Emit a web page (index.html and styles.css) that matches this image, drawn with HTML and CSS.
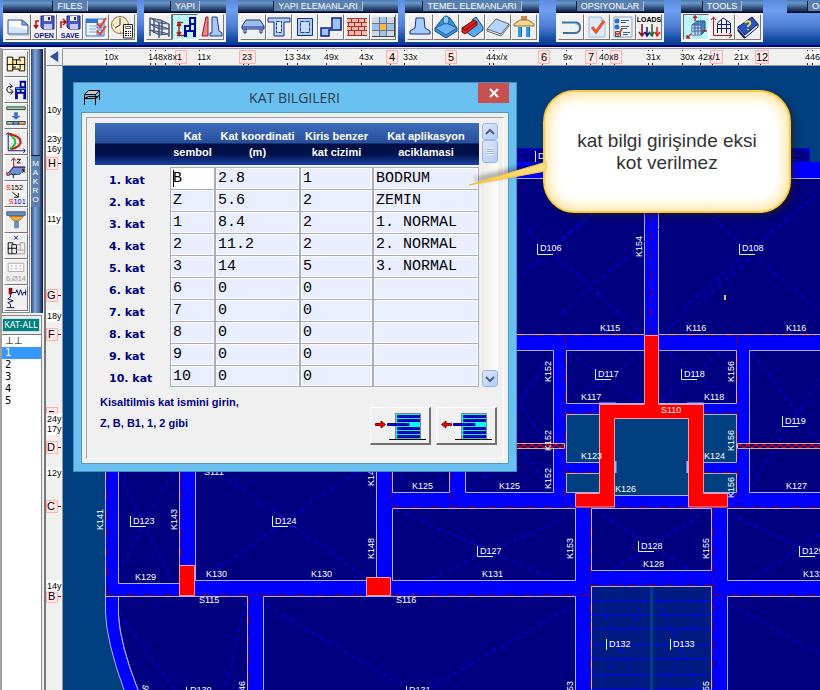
FILE: index.html
```html
<!DOCTYPE html>
<html lang="tr">
<head>
<meta charset="utf-8">
<title>KAT BILGILERI</title>
<link rel="stylesheet" href="styles.css">
</head>
<body>
<header class="ribbon">
  <section class="group">
    <h2><span>FILES</span></h2>
    <div class="tools">
      <button aria-label="Yeni"><svg viewBox="0 0 24 24"><path d="M2 5H16L22 10V19H2Z" fill="#d4e6fb" stroke="#3c5b9a"/><path d="M3 6H15V9L21 12V14L3 11Z" fill="#fff"/><path d="M16 5V10H22Z" fill="#86b1e8" stroke="#3c5b9a"/><path d="M3 20H23V11" fill="none" stroke="#9aa5bb"/></svg></button>
      <button aria-label="Open"><svg viewBox="0 0 24 24"><path d="M9 1H22V14H11L9 12Z" fill="#4c55c4" stroke="#23287e"/><path d="M12 1H19V6H12Z" fill="#e8edff"/><path d="M16 2H18V5H16Z" fill="#23287e"/><path d="M12 9H20V14H12Z" fill="#c0caf5"/><path d="M7 6H4V12M2 10L4 13L6 10" fill="none" stroke="#b01010" stroke-width="1.5"/><text x="12" y="23" class="cap">OPEN</text></svg></button>
      <button aria-label="Save"><svg viewBox="0 0 24 24"><path d="M9 1H22V14H11L9 12Z" fill="#4c55c4" stroke="#23287e"/><path d="M12 1H19V6H12Z" fill="#e8edff"/><path d="M16 2H18V5H16Z" fill="#23287e"/><path d="M12 9H20V14H12Z" fill="#c0caf5"/><path d="M3 13V7H7M5 4L8 7L5 10" fill="none" stroke="#b01010" stroke-width="1.5"/><text x="12" y="23" class="cap">SAVE</text></svg></button>
      <button aria-label="Liste"><svg viewBox="0 0 24 24"><path d="M2 4H20V21H2Z" fill="#eef5ff" stroke="#3579c8"/><path d="M2 4H14V8H2Z" fill="#2d78cc"/><path d="M5 11H12M5 14H12M5 17H12" stroke="#80a0cc"/><path d="M13 9H18V13H13ZM13 15H18V20H13Z" fill="#fff" stroke="#3579c8"/><path d="M13 8L16 12L22 3M13 16L16 19L22 11" fill="none" stroke="#e8402c" stroke-width="2"/></svg></button>
      <button aria-label="Saat"><svg viewBox="0 0 24 24"><circle cx="10" cy="10" r="8.500" fill="#f8edcc" stroke="#8b7442"/><path d="M10 3V10L5 13" fill="none" stroke="#4a3b21"/><path d="M3 10H4M16 10H17M10 17H11" stroke="#8b7442"/><path d="M13.500 9.500H22.500V23H13.500Z" fill="#fff" stroke="#222"/><path d="M15.500 11.500H20.500V13.500H15.500Z" fill="#fff" stroke="#666"/><path d="M15 16.500H17M18 16.500H19M20 16.500H21M15 18.500H17M18 18.500H19M20 18.500H21M15 20.500H17M18 20.500H19M20 20.500H21" stroke="#000"/></svg></button>
    </div>
  </section>
  <section class="group gap-s">
    <h2><span>YAPI</span></h2>
    <div class="tools">
      <button aria-label="Yapi"><svg viewBox="0 0 24 24"><path d="M3 3L14 5L22 9L12 8ZM3 9L14 11L22 14L12 14ZM3 15L14 17L22 19L12 20Z" fill="#95aac8" stroke="#465872"/><path d="M3 3V21M7 4V18M12 8V23M22 9V22M15 6V20" stroke="#465872" stroke-width="1.500"/></svg></button>
      <button class="on" aria-label="Katlar"><svg viewBox="0 0 24 24"><path d="M11 10H16V2H23V22H20V17H14V22H11ZM13 12V15H16V12ZM18 4V8H21V4ZM18 10V15H21V10Z" fill="#0000a0" fill-rule="evenodd"/><path d="M6 9V19M4 11L6 8L8 11M4 17L6 20L8 17M4 7.500H10M4 20.500H11" fill="none" stroke="#b01818" stroke-width="1.500"/></svg></button>
      <button aria-label="Perde"><svg viewBox="0 0 24 24"><path d="M7 2H9V21H3Z" fill="#e08a90" stroke="#a41822"/><path d="M13 2H18L20 16L23 18V21H11V18H13Z" fill="#abc7ef" stroke="#1c3f9b"/></svg></button>
    </div>
  </section>
  <section class="group gap-m">
    <h2><span>YAPI ELEMANLARI</span></h2>
    <div class="tools">
      <button aria-label="Doseme"><svg viewBox="0 0 24 24"><path d="M5 5H19L23 11V14H1V11Z" fill="#9cbcec" stroke="#1b2f80"/><path d="M1 12H23M3 14V18H5V14M19 14V18H21V14" fill="none" stroke="#1b2f80"/></svg></button>
      <button aria-label="Kiris"><svg viewBox="0 0 24 24"><path d="M1 3H23V7H17V21H7V7H1Z" fill="#b3d4fb" stroke="#1b2f80"/><path d="M9.500 6.500H14.500V17.500H9.500Z" fill="#dbeaff" stroke="#334" stroke-dasharray="3 1"/></svg></button>
      <button aria-label="Kolon"><svg viewBox="0 0 24 24"><path d="M4.500 3.500H19.500V20.500H4.500Z" fill="#a5cdfb" stroke="#1b2f80"/><path d="M7.500 6.500H16.500V17.500H7.500Z" fill="#c0ddff" stroke="#444" stroke-dasharray="4 1"/></svg></button>
      <button aria-label="Perde plan"><svg viewBox="0 0 24 24"><path d="M14 3H22V15H10V21H2V13H13V3Z" fill="#9cc4f8" stroke="#101c8a" stroke-width="1.500"/></svg></button>
      <button aria-label="Duvar"><svg viewBox="0 0 24 24"><path d="M2 3H22V21H2Z" fill="#f0b8a8"/><path d="M2 3.500H22M2 7.500H22M2 11.500H22M2 15.500H22M2 20.500H22M6.500 3V7M13.500 3V7M19.500 3V7M3.500 7V11M9.500 7V11M16.500 7V11M6.500 11V15M13.500 11V15M19.500 11V15M3.500 15V20M9.500 15V20M16.500 15V20" stroke="#a03426"/></svg></button>
      <button aria-label="Izgara"><svg viewBox="0 0 24 24"><path d="M1 2H23V21H1Z" fill="#a0c0ea"/><path d="M1 2H8V8H1ZM16 2H23V8H16ZM1 15H8V21H1ZM16 15H23V21H16Z" fill="#d0d8e4"/><path d="M8 8H16V15H8Z" fill="#f6bd3c"/><path d="M1 8.500H23M1 15.500H23M8.500 2V21M15.500 2V21" stroke="#69748c"/><path d="M1 21.500H23.500V2" fill="none" stroke="#404858"/></svg></button>
    </div>
  </section>
  <section class="group gap-s">
    <h2><span>TEMEL ELEMANLARI</span></h2>
    <div class="tools">
      <button aria-label="Tekil temel"><svg viewBox="0 0 24 24"><path d="M8 3H16L17 13L22 16V19H2V16L7 13Z" fill="#a5cdfb" stroke="#1b2f80"/></svg></button>
      <button aria-label="Temel"><svg viewBox="0 0 24 24"><path d="M9 3L12 1L16 3L23 13V16L12 23L1 16V13Z" fill="#3b8edb" stroke="#174a8d"/><path d="M12 8L23 13L12 20L1 13Z" fill="#6bb3f4" stroke="#205ba0"/><ellipse cx="12" cy="5" rx="3" ry="4" fill="#8ac8fa" stroke="#205ba0"/></svg></button>
      <button aria-label="Surekli temel"><svg viewBox="0 0 24 24"><path d="M13 4L16 2L23 12V15L14 22L6 17Z" fill="#5aa8ee" stroke="#174a8d"/><path d="M2 13L14 5L17 7V10L5 19L2 17Z" fill="#d82121" stroke="#700b0b"/><path d="M2 13L5 15L17 7" fill="none" stroke="#700b0b"/></svg></button>
      <button aria-label="Radye"><svg viewBox="0 0 24 24"><path d="M1 14L10 4L23 9L15 19Z" fill="#b7d5fa" stroke="#5d6570"/><path d="M1 14V16L15 21L23 11V9" fill="none" stroke="#5d6570"/></svg></button>
      <button aria-label="Kazik"><svg viewBox="0 0 24 24"><path d="M9 1H15V5H9Z" fill="#c88757"/><path d="M8 5H16L22 9V11H2V9Z" fill="#f4d48e" stroke="#967029"/><path d="M6 12H10V22H6ZM14 12H18V22H14Z" fill="#2f9be4"/><path d="M9.500 12V22M17.500 12V22" stroke="#126bad"/></svg></button>
    </div>
  </section>
  <section class="group gap-l">
    <h2><span>OPSIYONLAR</span></h2>
    <div class="tools">
      <button aria-label="Geri"><svg viewBox="0 0 24 24"><path d="M3 7.500H17Q21 8 21 12.500Q21 18 16 18H4" fill="none" stroke="#41709b" stroke-width="2"/><path d="M3 8.500H16Q19 9 20 12" fill="none" stroke="#8db7da"/></svg></button>
      <button aria-label="Kontrol"><svg viewBox="0 0 24 24"><path d="M4 2H16L20 6V22H4Z" fill="#dcebfc" stroke="#a9bad2"/><path d="M16 2V6H20" fill="#b8cfeb" stroke="#a9bad2"/><path d="M7 12L11 17L19 6" fill="none" stroke="#e9572c" stroke-width="3"/></svg></button>
      <button aria-label="Ayarlar"><svg viewBox="0 0 24 24"><path d="M3 2H21V22H3Z" fill="#eaf2fd" stroke="#8fa2c0"/><circle cx="6" cy="6" r="2.500" fill="#2770c5"/><circle cx="6" cy="12" r="2.500" fill="#2770c5"/><path d="M10 5.500H18M10 7.500H15M10 11.500H18M10 13.500H16M12 17.500H19M12 19.500H17" stroke="#50617c"/><path d="M4.500 16.500H9.500V21.500H4.500Z" fill="#fff" stroke="#334f7c"/><path d="M5 18L7 20L11 14" fill="none" stroke="#d84b29" stroke-width="2"/></svg></button>
      <button aria-label="Loads"><svg viewBox="0 0 24 24"><text x="12" y="7" class="cap black">LOADS</text><path d="M5 9V20M2 17L5 21L8 17" fill="none" stroke="#7a0d15" stroke-width="1.500"/><path d="M10 12V20M8 17L10 21L13 17" fill="none" stroke="#12128a" stroke-width="1.500"/><path d="M15 9V20M12 17L15 21L17 17" fill="none" stroke="#166b26" stroke-width="1.500"/><path d="M20 12V20M18 17L20 21L23 17" fill="none" stroke="#df1f1f" stroke-width="1.500"/></svg></button>
    </div>
  </section>
  <section class="group gap-l">
    <h2><span>TOOLS</span></h2>
    <div class="tools">
      <button class="on" aria-label="3D"><svg viewBox="0 0 24 24"><path d="M8 10L13 6H21V16L17 20H8Z" fill="#4d82c4" stroke="#244b80"/><path d="M8 10H17V20H8Z" fill="#b8d4ef"/><path d="M8 10H17V20M11 10V20M14 10V20M8 13H17M8 16H17M17 10L21 6" fill="none" stroke="#3e649a"/><path d="M11 6V1M9 3L11 1L13 3M18 16H23M7 19L3 23M3 20V23H6" fill="none" stroke="#b02424" stroke-width="1.500"/></svg></button>
      <button aria-label="Grafik"><svg viewBox="0 0 24 24"><path d="M3.500 2V20.500H22M1 5L3.500 2L6 5M19 18L22 20.500L19 23" fill="none" stroke="#9b1d1d"/><path d="M7.500 18V8L13 3L20.500 8V18M11.500 18V5M16.500 18V5M7 9.500H21M7 13.500H21" fill="none" stroke="#101878"/></svg></button>
      <button aria-label="Yardim"><svg viewBox="0 0 24 24"><path d="M2 12L16 2L22 9L9 20Z" fill="#2456c4" stroke="#101d65"/><path d="M2 12V15L9 23L22 12V9L9 20Z" fill="#e6eeff" stroke="#101d65"/><path d="M2 15L9 23" stroke="#101d65" stroke-width="2"/><path d="M9 8Q11 5 14 7Q15 9 12 11V12M12 14V15" fill="none" stroke="#ffd739" stroke-width="2"/></svg></button>
    </div>
  </section>
  <section class="group gap-xl">
    <h2><span>Or</span></h2>
  </section>
</header>

<main class="work">
  <aside class="side">
    <div class="makro">
      <div class="palette">
        <button aria-label="Plan"><svg viewBox="0 0 24 24"><path d="M2.500 4.500H8.500V7.500H15.500V4.500H21.500V19.500H15.500V17.500H8.500V19.500H2.500Z" fill="#fff2b0" stroke="#000"/><path d="M2 12.500H22M12.500 7V12M8.500 7V18M16.500 12V18M16.500 7V9M8 15.500H12" stroke="#000"/></svg></button>
        <button aria-label="Dondur"><svg viewBox="0 0 24 24"><path d="M11 9H16V2H23V22H20V16H14V22H11ZM13 12V14H16V12ZM18 4V8H21V4ZM18 12V14H21V12Z" fill="#0000a0" fill-rule="evenodd"/><path d="M12 10.500H22" stroke="#26c8e8"/><path d="M8 8Q2 7 2 12Q3 16 8 14M6 11L9 14L6 17M5 5L8 8L5 10" fill="none" stroke="#000"/></svg></button>
        <button aria-label="Kopyala"><svg viewBox="0 0 24 24"><path d="M2 2H22V5H2Z" fill="#8fe08f" stroke="#335"/><path d="M10 8H14V12H17L12 16L7 12H10Z" fill="#3c72cc"/><path d="M2 18H9V21H2Z" fill="#8fe08f" stroke="#335"/><path d="M9 18H15V21H9Z" fill="#6a9be8" stroke="#335"/><path d="M15 18H22V21H15Z" fill="#f5b050" stroke="#335"/></svg></button>
        <button aria-label="Diyagram"><svg viewBox="0 0 24 24"><path d="M6 3.500H16V20M6 8.500H20M6 13.500H20M11.500 3V20" fill="none" stroke="#ccc"/><path d="M3.500 2V21.500H22M1 4L3.500 2L6 4M20 19L22 21.500L20 24" fill="none" stroke="#0a0a80"/><path d="M4 3Q12 8 11 13Q10 17 5 20" fill="none" stroke="#16c02a" stroke-width="2"/><path d="M4 3Q18 6 17 13Q15 18 7 20" fill="none" stroke="#c81919" stroke-width="2"/></svg></button>
        <button aria-label="Eksen"><svg viewBox="0 0 24 24"><path d="M9 11H22L16 19H4Z" fill="#6d91d4" stroke="#334d95"/><path d="M9.500 11V2M7 4L9.500 1L12 4M9 11L2 19M2 16V20H5M9 11H22" fill="none" stroke="#70101c"/><path d="M13 2.500H17L13 6.500H17M19 13L22 17M22 13L19 17M7 18L9 20L11 18M9 20V23" fill="none" stroke="#000"/></svg></button>
        <button aria-label="S152 S101"><svg viewBox="0 0 24 24"><text x="1" y="8" class="code red">S<tspan class="black">152</tspan></text><path d="M8 10L14 15M14.500 11V15.500H10" fill="none" stroke="#000"/><text x="4" y="23" class="code red">S<tspan class="blue">101</tspan></text></svg></button>
        <button aria-label="Baslik"><svg viewBox="0 0 24 24"><path d="M2 3H22V7H2Z" fill="#638fbd" stroke="#345f8c"/><path d="M5 8H20L15 13H10Z" fill="#f7ae36" stroke="#b35a16"/><path d="M10 13H15V21H10Z" fill="#638fbd"/></svg></button>
        <button aria-label="Kat plani"><svg viewBox="0 0 24 24"><path d="M10 1L14 5M14 1L10 5" stroke="#101080"/><path d="M3.500 8.500H8.500V10.500H12.500V20.500H3.500ZM3 14.500H12M7.500 10V20" fill="none" stroke="#000"/><path d="M12 10.500H16.500V8.500H21.500V20.500H12M12 16.500H21M16.500 10V16" fill="none" stroke="#999"/></svg></button>
        <button aria-label="Donati" disabled><svg viewBox="0 0 24 24"><path d="M3.500 2.500H20.500V11.500H3.500Z" fill="#f8f8f8" stroke="#aaa"/><path d="M6 5.500H8M11 5.500H13M16 5.500H18M6 8.500H8M11 8.500H13M16 8.500H18" stroke="#aaa"/><text x="1" y="22" class="code gray">6,Ø14</text></svg></button>
        <button aria-label="Yay"><svg viewBox="0 0 24 24"><path d="M4 1H8V8H4Z" fill="#8b1019"/><path d="M7 6H12L13 3L15 9L17 3L19 9L20 6H23M22.500 3V9M6 8V11L3 13L9 15L3 17L6 19V22M2 22.500H10" fill="none" stroke="#0a0a55"/></svg></button>
      </div>
      <div class="makro-bar"><span>M<br>A<br>K<br>R<br>O</span></div>
    </div>
    <div class="floors">
      <button class="kat-all">KAT-ALL</button>
      <ul>
        <li class="base">⊥⊥</li>
        <li class="sel">1</li>
        <li>2</li>
        <li>3</li>
        <li>4</li>
        <li>5</li>
      </ul>
    </div>
  </aside>

  <div class="view">
    <button class="corner" aria-label="Geri"><svg viewBox="0 0 16 17"><path d="M12 2V14L3 8Z" fill="#35539b"/></svg></button>
    <svg class="ruler-x" aria-label="X aksları">
      <g transform="translate(-63 -49)">
        <path class="tick" d="M106.500 50V66M150.500 50V66M155.500 50V66M165.500 50V66M179.500 50V66M199.500 50V66M243.500 50V66M248.500 50V66M287.500 50V66M297.500 50V66M326.500 50V66M361.500 50V66M390.500 50V66M404.500 50V66M449.500 50V66M489.500 50V66M493.500 50V66M542.500 50V66M566.500 50V66M590.500 50V66M602.500 50V66M614.500 50V66M648.500 50V66M652.500 50V66M682.500 50V66M700.500 50V66M712.500 50V66M738.500 50V66M760.500 50V66M807.500 50V66M812.500 50V66"/>
        <g class="plate"><path d="M104 51H119V63H104ZM148 51H177V63H148ZM197 51H211V63H197ZM284 51H310V63H284ZM324 51H338V63H324ZM359 51H374V63H359ZM403 51H418V63H403ZM486 51H506V63H486ZM562 51H574V63H562ZM600 51H613V63H600ZM646 51H660V63H646ZM680 51H713V63H680ZM734 51H748V63H734ZM806 51H830V63H806Z"/></g>
        <g class="axis"><path d="M175.500 50.500H186.500V63.500H175.500ZM239.500 50.500H255.500V63.500H239.500ZM386.500 50.500H397.500V63.500H386.500ZM445.500 50.500H456.500V63.500H445.500ZM538.500 50.500H549.500V63.500H538.500ZM585.500 50.500H596.500V63.500H585.500ZM610.500 50.500H621.500V63.500H610.500ZM710.500 50.500H722.500V63.500H710.500ZM755.500 50.500H768.500V63.500H755.500Z"/></g>
        <g class="lab">
          <text x="104" y="60">10x</text><text x="148" y="60">148x8x1</text><text x="197" y="60">11x</text><text x="242" y="60">23</text><text x="284" y="60">13</text><text x="296" y="60">34x</text><text x="324" y="60">49x</text><text x="359" y="60">43x</text><text x="389" y="61" class="ax">4</text><text x="403" y="60">33x</text><text x="448" y="61" class="ax">5</text><text x="486" y="60">44x/x</text><text x="541" y="61" class="ax">6</text><text x="563" y="60">9x</text><text x="588" y="61" class="ax">7</text><text x="599" y="60">40x8</text><text x="646" y="60">31x</text><text x="680" y="60">30x</text><text x="698" y="60">42x/1</text><text x="734" y="60">21x</text><text x="756" y="61" class="ax">12</text><text x="805" y="60">446</text>
        </g>
      </g>
    </svg>
    <svg class="ruler-y" aria-label="Y aksları">
      <g transform="translate(-46 -66)">
        <path class="tick" d="M57 163.500H61M57 295.500H61M57 334.500H61M57 447.500H61M57 506.500H61M57 596.500H61"/>
        <g class="plate"><path d="M47 104H62V116H47ZM47 133H62V155H47ZM47 213H62V225H47ZM47 310H62V322H47ZM47 413H62V435H47ZM47 467H62V479H47ZM47 580H62V592H47Z"/></g>
        <g class="axis"><path d="M46.500 157.500H57.500V169.500H46.500ZM46.500 289.500H57.500V301.500H46.500ZM46.500 328.500H57.500V340.500H46.500ZM46.500 407.500H57.500V413H46.500ZM46.500 441.500H57.500V453.500H46.500ZM46.500 500.500H57.500V512.500H46.500ZM46.500 592H57.500V602.500H46.500Z"/></g>
        <g class="lab">
          <text x="47" y="113">10y</text><text x="47" y="142">23y</text><text x="47" y="152">16y</text><text x="48" y="167" class="ax">H</text><text x="47" y="222">11y</text><text x="47" y="299" class="ax">G</text><text x="47" y="319">18y</text><text x="48" y="338" class="ax">F</text><path d="M49 411.500H54" stroke="#000"/><text x="47" y="422">24y</text><text x="47" y="432">17y</text><text x="47" y="451" class="ax">D</text><text x="47" y="476">12y</text><text x="47" y="510" class="ax">C</text><text x="47" y="589">14y</text><text x="48" y="600" class="ax">B</text>
        </g>
      </g>
    </svg>

    <svg class="plan" role="img" aria-label="Kat kalıp planı">
      <defs><pattern id="brick" width="8" height="5" patternUnits="userSpaceOnUse" y="443"><path d="M0 5L4 1L8 5" fill="none" stroke="#e00000" stroke-width="1.500"/></pattern></defs>
      <g transform="translate(-63 -66)">
        <path class="beam" d="M500 162H2000V2000H176Q141 740 124 690Q106 640 106 612V440H500Z"/>
        <path d="M500 148.500H809.500V162H500Z" fill="#000080" stroke="#00f"/>
        <path class="diag" d="M500 150L600 161M500 161L600 150M790 161L809 150"/>
        <g class="room">
          <path d="M500 178.500H644.500V334.500H500ZM658.500 178.500H1600V334.500H658.500Z"/>
          <path d="M465.500 350.500H553.500V492.500H465.500ZM566.500 350.500H644.500V403.500H566.500ZM658.500 350.500H736.500V403.500H658.500ZM749.500 350.500H1600V492.500H749.500Z"/>
          <path d="M392.500 440H449.500V492.500H392.500ZM195.500 440H376.500V580.500H195.500ZM118.500 440H179.500V583.500H118.500Z"/>
          <path d="M392.500 508.500H575.500V580.500H392.500ZM591.500 508.500H711.500V570.500H591.500ZM727.500 508.500H1600V580.500H727.500Z"/>
          <path d="M263.500 596.500H575.500V1600H263.500ZM727.500 596.500H1600V1600H727.500ZM106 596.500H118.500V615Q119 640 138 690L176 1600H247.500V596.500H118.500"/>
        </g>
        <path d="M106 597H118V616Q120 645 138 690H124Q106 640 106 612Z" fill="#00f"/>
        <path class="line" d="M105.500 470V612Q106 640 124 690M118.500 597V615Q120 645 138 690M106 596.500H118"/>
        <g class="void">
          <path d="M566.500 414.500H600V462.500H566.500ZM566.500 473.500H600V492.500H566.500ZM703 414.500H736.500V462.500H703ZM703 473.500H736.500V492.500H703ZM614 418H689V495.500H614Z"/>
        </g>
        <path d="M591.500 586.500H711.500V1600H591.500Z" fill="#001c80" stroke="#b0b0ff"/>
        <path d="M592 600.500H711M592 615.500H711M592 629.500H711M592 644.500H711M592 659.500H711M592 674.500H711M592 689.500H711" stroke="#00f"/>
        <path d="M650 587H653V1600H650Z" fill="#004080"/>
        <path class="diag" d="M516 220L642 333M516 280L600 206M700 206L826 318M682 309L818 193M592 214L551 247M660 228L560 315M664 333L752 257"/>
        <path class="diag" d="M516 408L552 354M516 400L550 446M516 440L552 490M569 352L642 402M642 352L578 402M668 352L733 402M720 352L660 402M752 353L836 464M836 354L750 488"/>
        <path class="diag" d="M119 473L174 583M172 473L119 570M220 474L366 578M356 472L204 578M396 510L554 579M574 514L428 579M594 510L688 569M708 510L614 569M730 514L870 580M850 515L750 580M119 613L175 690M246 602L225 690M266 605L410 690M574 605L426 690M730 605L818 654M594 592L640 690M648 592L600 690M655 592L700 690M709 592L662 690M396 488L406 470M436 470L448 492M470 490L490 472"/>
        <path class="trace" d="M516 335.500H820M106.500 472V596M180.500 472V595M391.500 472V507M106 595.500H590M392 507.500H820M565.500 336V507M737.500 336V507M651.500 213V335M590.500 508V690M712.500 508V690M590 585.500H712M712 595.500H820M450.500 472V507M248.500 597V690M566 413.500H600M703 413.500H737M566 472.500H600M703 472.500H737"/>
        <path d="M500 443.500H564.500V448.500H500ZM737.500 443.500H1600V448.500H737.500Z" fill="#000080"/>
        <path d="M500 443.500H564.500V448.500H500ZM737.500 443.500H1600V448.500H737.500Z" fill="url(#brick)" stroke="#d8b08c"/>
        <path class="red" d="M644.500 335.500H658.500V404.500H703.500V493.500H727.500V507H688.500V418.500H614.500V507H575.500V493.500H599.500V404.500H644.500ZM179.500 565.500H194.500V595.500H179.500ZM366.500 577.500H390.500V595.500H366.500Z"/>
        <path d="M599 403.500H616M687 403.500H704M615.500 461V473M687.500 461V473" stroke="#b0b0ff" stroke-width="2"/>
        <path d="M724 295H726V300H724Z" fill="#e8c060"/>
        <path class="mark" d="M537.500 244V254.500H553M739.500 244V254.500H755M595.500 369V379.500H611M681.500 369V379.500H697M782.500 416V426.500H798M130.500 516V526.500H146M272.500 516V526.500H288M477.500 546V556.500H493M638.500 541V551.500H654M799.500 546V556.500H815M606.500 639V650M670.500 639V650M406.500 686V696M186.500 687V697M535.500 151V162"/>
        <g class="tag">
          <text x="538" y="159">D</text>
          <text x="540" y="251">D106</text><text x="742" y="251">D108</text><text x="598" y="377">D117</text><text x="684" y="377">D118</text><text x="785" y="424">D119</text><text x="133" y="524">D123</text><text x="275" y="524">D124</text><text x="480" y="554">D127</text><text x="641" y="549">D128</text><text x="802" y="554">D129</text><text x="609" y="647">D132</text><text x="673" y="647">D133</text><text x="409" y="693">D131</text><text x="190" y="693">D130</text>
          <text x="600" y="331">K115</text><text x="686" y="331">K116</text><text x="786" y="331">K116</text><text x="581" y="400">K117</text><text x="704" y="400">K118</text><text x="581" y="459">K123</text><text x="704" y="459">K124</text><text x="412" y="489">K125</text><text x="499" y="489">K125</text><text x="615" y="492">K126</text><text x="786" y="489">K127</text><text x="643" y="567">K128</text><text x="135" y="580">K129</text><text x="206" y="577">K130</text><text x="311" y="577">K130</text><text x="482" y="577">K131</text><text x="803" y="577">K132</text><text x="661" y="413">S110</text><text x="199" y="603">S115</text><text x="396" y="603">S116</text><text x="204" y="475">S111</text>
          <text transform="translate(642 257) rotate(-90)">K154</text><text transform="translate(551 382) rotate(-90)">K152</text><text transform="translate(551 451) rotate(-90)">K152</text><text transform="translate(551 489) rotate(-90)">K152</text><text transform="translate(734 382) rotate(-90)">K156</text><text transform="translate(734 451) rotate(-90)">K156</text><text transform="translate(734 498) rotate(-90)">K156</text><text transform="translate(103 530) rotate(-90)">K141</text><text transform="translate(177 530) rotate(-90)">K143</text><text transform="translate(374 559) rotate(-90)">K148</text><text transform="translate(374 486) rotate(-90)">K148</text><text transform="translate(573 559) rotate(-90)">K153</text><text transform="translate(709 559) rotate(-90)">K155</text><text transform="translate(573 702) rotate(-90)">K153</text><text transform="translate(709 702) rotate(-90)">K155</text><text transform="translate(245 702) rotate(-90)">K146</text><text transform="translate(142 706) rotate(-70)">K136</text>
        </g>
      </g>
    </svg>

    <form class="dialog" role="dialog" aria-label="KAT BILGILERI">
      <div class="titlebar">
        <svg class="sysicon" viewBox="0 0 18 17"><path d="M1.500 5.500L5.500 1.500H16.500L12.500 5.500Z" fill="#c8c8c8" stroke="#000"/><path d="M1.500 9.500L5.500 7.500H15L12.500 9.500Z" fill="#aaa" stroke="#000"/><path d="M1.500 5V16M12.500 6V16M16.500 2V11M12.500 9.500L16.500 6" stroke="#000"/></svg>
        <h1>KAT BILGILERI</h1>
        <button type="button" class="close" aria-label="Kapat"><svg viewBox="0 0 10 10"><path d="M1 1L9 9M9 1L1 9" stroke="#fff" stroke-width="2"/></svg></button>
      </div>
      <div class="client">
        <div class="frame">
          <div class="gridrow">
            <table>
              <colgroup><col class="c0"><col class="c1"><col class="c2"><col class="c3"><col class="c4"></colgroup>
              <thead><tr><th></th><th>Kat<br>sembol</th><th>Kat koordinati<br>(m)</th><th>Kiris benzer<br>kat cizimi</th><th>Kat aplikasyon<br>aciklamasi</th></tr></thead>
              <tbody>
                <tr><th>1. kat</th><td><input class="active" aria-label="1 sembol" value="B"></td><td><input aria-label="1 koordinat" value="2.8"></td><td><input aria-label="1 benzer" value="1"></td><td><input aria-label="1 aciklama" value="BODRUM"></td></tr>
                <tr><th>2. kat</th><td><input aria-label="2 sembol" value="Z"></td><td><input aria-label="2 koordinat" value="5.6"></td><td><input aria-label="2 benzer" value="2"></td><td><input aria-label="2 aciklama" value="ZEMIN"></td></tr>
                <tr><th>3. kat</th><td><input aria-label="3 sembol" value="1"></td><td><input aria-label="3 koordinat" value="8.4"></td><td><input aria-label="3 benzer" value="2"></td><td><input aria-label="3 aciklama" value="1. NORMAL"></td></tr>
                <tr><th>4. kat</th><td><input aria-label="4 sembol" value="2"></td><td><input aria-label="4 koordinat" value="11.2"></td><td><input aria-label="4 benzer" value="2"></td><td><input aria-label="4 aciklama" value="2. NORMAL"></td></tr>
                <tr><th>5. kat</th><td><input aria-label="5 sembol" value="3"></td><td><input aria-label="5 koordinat" value="14"></td><td><input aria-label="5 benzer" value="5"></td><td><input aria-label="5 aciklama" value="3. NORMAL"></td></tr>
                <tr><th>6. kat</th><td><input aria-label="6 sembol" value="6"></td><td><input aria-label="6 koordinat" value="0"></td><td><input aria-label="6 benzer" value="0"></td><td><input aria-label="6 aciklama" value=""></td></tr>
                <tr><th>7. kat</th><td><input aria-label="7 sembol" value="7"></td><td><input aria-label="7 koordinat" value="0"></td><td><input aria-label="7 benzer" value="0"></td><td><input aria-label="7 aciklama" value=""></td></tr>
                <tr><th>8. kat</th><td><input aria-label="8 sembol" value="8"></td><td><input aria-label="8 koordinat" value="0"></td><td><input aria-label="8 benzer" value="0"></td><td><input aria-label="8 aciklama" value=""></td></tr>
                <tr><th>9. kat</th><td><input aria-label="9 sembol" value="9"></td><td><input aria-label="9 koordinat" value="0"></td><td><input aria-label="9 benzer" value="0"></td><td><input aria-label="9 aciklama" value=""></td></tr>
                <tr><th>10. kat</th><td><input aria-label="10 sembol" value="10"></td><td><input aria-label="10 koordinat" value="0"></td><td><input aria-label="10 benzer" value="0"></td><td><input aria-label="10 aciklama" value=""></td></tr>
              </tbody>
            </table>
            <div class="scroll">
              <button type="button" aria-label="Yukari"><svg viewBox="0 0 10 10"><path d="M1 7L5 3L9 7" fill="none" stroke="#4d6185" stroke-width="2"/></svg></button>
              <div class="thumb"></div>
              <button type="button" class="down" aria-label="Asagi"><svg viewBox="0 0 10 10"><path d="M1 3L5 7L9 3" fill="none" stroke="#4d6185" stroke-width="2"/></svg></button>
            </div>
          </div>
          <div class="bottom">
            <p>Kisaltilmis kat ismini girin,<br>Z, B, B1, 1, 2 gibi</p>
            <button type="button" aria-label="Kat ekle"><svg viewBox="0 0 54 30"><path d="M22.500 2.500H47.500V28H22.500Z" fill="#0ff" stroke="#808080"/><path d="M24.500 4.500H46.500V6.500H24.500ZM24.500 8.500H46.500V10.500H24.500ZM14.500 12.500H36V14.500H14.500ZM24.500 16.500H46.500V18.500H24.500ZM24.500 20.500H46.500V22.500H24.500ZM24.500 24.500H46.500V26.500H24.500Z" fill="#00f" stroke="#000080"/><path d="M16 28.500H53" stroke="#000"/><path d="M2.500 12.500H8V10L12.500 13.500L8 17V14.500H2.500Z" fill="#f00" stroke="#800000"/></svg></button>
            <button type="button" aria-label="Kat sil"><svg viewBox="0 0 54 30"><path d="M22.500 2.500H47.500V28H22.500Z" fill="#0ff" stroke="#808080"/><path d="M24.500 4.500H46.500V6.500H24.500ZM24.500 8.500H46.500V10.500H24.500ZM14.500 12.500H36V14.500H14.500ZM24.500 16.500H46.500V18.500H24.500ZM24.500 20.500H46.500V22.500H24.500ZM24.500 24.500H46.500V26.500H24.500Z" fill="#00f" stroke="#000080"/><path d="M16 28.500H53" stroke="#000"/><path d="M12.500 12.500H7V10L2.500 13.500L7 17V14.500H12.500Z" fill="#f00" stroke="#800000"/></svg></button>
          </div>
        </div>
      </div>
    </form>

    <div class="callout">
      <svg class="tail" viewBox="0 0 80 30"><defs><linearGradient id="tailFill"><stop offset="0" stop-color="#ffc93c"/><stop offset="1" stop-color="#ffe08a"/></linearGradient></defs><path d="M4 18L72 0V10L10 22Z" fill="#000" opacity=".3" filter="blur(2px)"/><path d="M0 25L77 2V11Z" fill="url(#tailFill)" stroke="#f5bf3c"/></svg>
      <p>kat bilgi girişinde eksi<br>kot verilmez</p>
    </div>
  </div>
</main>
</body>
</html>
```
FILE: styles.css
```css
* { box-sizing: border-box; }

body {
  margin: 0;
  height: 100vh;
  display: flex;
  flex-direction: column;
  overflow: hidden;
  background: #f0f0f0;
  font-family: "Liberation Sans", Arial, sans-serif;
}

button { padding: 0; margin: 0; font: inherit; }
svg { display: block; }
h1, h2, p, ul { margin: 0; padding: 0; }

/* Ribbon */
.ribbon {
  flex: none;
  display: flex;
  height: 48px;
  padding-left: 3px;
  overflow: hidden;
  background: linear-gradient(#5a8ade 0, #6f9ff0 10px, #4f7ed4 26px, #0a4298 42px, #003c90 45px, #000080 45px, #000080 47px, #f0f0f0 47px);
}
.group { flex: none; }
.gap-s { margin-left: 7px; }
.gap-m { margin-left: 12px; }
.gap-l { margin-left: 17px; }
.gap-xl { margin-left: 24px; width: 60px; }
.group h2 {
  display: flex;
  justify-content: center;
  height: 13px;
  padding-top: 1px;
  background: linear-gradient(#4579b8, #6d96c4 3px, #3c5f90 7px, #0c1c3c 12px);
  border-bottom: 1px solid #000030;
  font: 9px/10px "Liberation Sans", sans-serif;
  color: #fff;
}
.group h2 span {
  height: 10px;
  padding: 0 4px;
  background: #5c80ae;
  border-left: 1px solid #101c38;
  border-right: 1px solid #a8c0dc;
}
.tools {
  display: flex;
  padding: 1px 2px;
  background: #f0f0f0;
  border-bottom: 1px solid #fff;
}
.tools button,
.palette button {
  width: 26px;
  height: 26px;
  background: #f0f0f0;
  border: 1px solid;
  border-color: #fff #777 #777 #fff;
}
.tools button.on {
  background: repeating-conic-gradient(#7ff 0 25%, #fff 0 50%) 0 0 / 2px 2px;
  border-color: #666 #fff #fff #666;
}
.cap {
  font: bold 7px "Liberation Sans", sans-serif;
  text-anchor: middle;
  fill: #1a1a90;
}
.code { font: 8px "Liberation Sans", sans-serif; }
.red { fill: #f00; }
.blue { fill: #00c; }
.black { fill: #000; }
.gray { fill: #999; }

/* Work area */
.work { flex: 1; display: flex; min-height: 0; }
.side {
  flex: none;
  width: 46px;
  display: flex;
  flex-direction: column;
  border-left: 2px solid #a0a0a0;
  border-right: 2px solid #777;
}
.makro { display: flex; gap: 1px; padding: 1px 0 2px 0; }
.palette {
  padding: 1px;
  background: #fff;
  border: 1px solid #888;
}
.palette button { display: block; width: 24px; }
.makro-bar {
  width: 12px;
  display: flex;
  align-items: center;
  background: linear-gradient(90deg, #2e4a7c, #7ea4d8 4px, #4e74ac 8px, #0b1636);
}
.makro-bar span {
  width: 9px;
  padding: 3px 0;
  background: #5c80ae;
  border-top: 1px solid #101c38;
  font: 8px/9px "Liberation Sans", sans-serif;
  text-align: center;
  color: #fff;
}
.floors {
  flex: 1;
  display: flex;
  flex-direction: column;
  margin-right: 2px;
  padding-top: 2px;
  border-top: 1px solid #888;
  border-right: 1px solid #888;
}
.kat-all {
  height: 14px;
  margin-right: 1px;
  background: #008080;
  border: 1px solid #cfe0e0;
  font: 9px/10px "Noto Sans", sans-serif;
  color: #fff;
  white-space: nowrap;
}
.floors ul {
  flex: 1;
  margin-top: 2px;
  background: #fff;
  border-top: 1px solid #777;
  list-style: none;
  font: 10px/12px "DejaVu Sans", sans-serif;
}
.floors li { padding-left: 3px; }
.floors .sel { background: #39f; color: #fff; }

/* Drawing view */
.view {
  position: relative;
  flex: 1;
  min-width: 0;
  display: grid;
  grid-template: 18px 1fr / 17px 1fr;
}
.corner {
  background: #f0f0f0;
  border: 1px solid;
  border-color: #fff #999 #888 #fff;
}
.ruler-x,
.ruler-y { width: 100%; height: 100%; background: #f0f0f0; overflow: hidden; }
.ruler-x { border-top: 1px solid #999; border-bottom: 1px solid #999; }
.ruler-y { border-right: 1px solid #999; }
.tick { stroke: #800000; }
.plate { fill: #fff; }
.axis { fill: #ffe8e8; stroke: #ffb0b0; }
.lab { font: 9px "Liberation Sans", sans-serif; fill: #000; }
.lab .ax { font-size: 11px; }
.plan { width: 100%; height: 100%; overflow: hidden; background: #004080; }
.beam { fill: #00f; }
.room { fill: #000080; stroke: #b0b0ff; }
.void { fill: #004080; stroke: #b0b0ff; }
.line { fill: none; stroke: #b0b0ff; }
.diag { fill: none; stroke: #00f; stroke-dasharray: 4 5; shape-rendering: crispEdges; }
.trace { fill: none; stroke: #800000; stroke-dasharray: 9 4 2 4; }
path.red { stroke: #ff9a9a; }
.mark { fill: none; stroke: #b8ffff; }
.tag { font: 9px "Liberation Sans", sans-serif; fill: #fff; }

/* Dialog */
.dialog {
  position: absolute;
  left: 27px;
  top: 34px;
  width: 444px;
  padding: 0 7px 7px;
  background: #69c0f1;
  border: 1px solid #4a90bd;
}
.titlebar { display: flex; align-items: flex-start; height: 29px; }
.sysicon { width: 18px; height: 17px; margin: 6px 0 0 2px; }
.titlebar h1 {
  flex: 1;
  padding-left: 10px;
  font: 14px/30px "Open Sans", "Noto Sans", sans-serif;
  text-align: center;
  color: #2b3c48;
}
.close {
  display: flex;
  align-items: center;
  justify-content: center;
  width: 31px;
  height: 20px;
  background: #c75050;
  border: 0;
}
.close svg { width: 10px; height: 10px; }
.client {
  padding: 4px;
  background: #f0f0f0;
  border: 1px solid #5099c5;
}
.frame {
  padding: 5px 6px 13px 8px;
  border: 1px solid;
  border-color: #a0a0a0 #fff #fff #a0a0a0;
}
.gridrow { display: flex; gap: 3px; }
table { table-layout: fixed; width: 384px; border-spacing: 0; }
.c0 { width: 75px; }
.c1 { width: 45px; }
.c2 { width: 85px; }
.c3 { width: 73px; }
.c4 { width: 106px; }
thead th {
  height: 42px;
  padding: 5px 0 0;
  background: linear-gradient(#3e6cb9, #274f9c 20px, #000f45 21px, #00104a 31px, #1843a4);
  font: bold 11px/16px "Liberation Sans", sans-serif;
  color: #fff;
  vertical-align: top;
  white-space: nowrap;
}
tbody::before { content: ""; display: block; height: 2px; }
tbody th {
  height: 22px;
  padding: 6px 0 0 14px;
  font: bold 11px/16px "DejaVu Sans", sans-serif;
  text-align: left;
  color: #000080;
}
td { height: 22px; padding: 0; }
td input {
  display: block;
  width: 100%;
  height: 22px;
  padding: 0 2px;
  background: #e9efff;
  border: 1px solid #a9adb5;
  border-bottom: 0;
  border-radius: 0;
  box-shadow: inset 0 0 0 1px #fff;
  font: 15px/20px "Liberation Mono", monospace;
  color: #000;
}
tr:last-child input { border-bottom: 1px solid #a9adb5; }
td input.active { background: linear-gradient(#000, #000) 2px 2px / 1px 17px no-repeat #fff; }
.scroll {
  display: flex;
  flex-direction: column;
  width: 16px;
  background: linear-gradient(90deg, #eeede5, #fdfdfa);
}
.scroll button,
.thumb {
  height: 17px;
  background: linear-gradient(135deg, #dce7ff, #b5caf8);
  border: 1px solid #9cb4e0;
  border-radius: 3px;
}
.scroll button { display: flex; align-items: center; justify-content: center; width: 16px; }
.scroll button svg { width: 10px; height: 10px; }
.thumb {
  display: flex;
  align-items: center;
  justify-content: center;
  height: 23px;
}
.thumb::after {
  content: "";
  width: 6px;
  height: 7px;
  background: repeating-linear-gradient(#fff 0 1px, #8ca8e0 1px 2px);
}
.scroll .down { margin-top: auto; }
.bottom {
  display: flex;
  align-items: flex-end;
  gap: 5px;
  height: 58px;
}
.bottom p {
  flex: 1;
  align-self: flex-start;
  padding: 5px 0 0 5px;
  font: bold 11px/21px "Liberation Sans", sans-serif;
  color: #000080;
}
.bottom button {
  width: 61px;
  height: 38px;
  padding: 2px;
  background: #f0f0f0;
  border: 1px solid;
  border-width: 1px 2px 2px 1px;
  border-color: #fff #707070 #707070 #fff;
}
.bottom button svg { width: 54px; height: 30px; }

/* Callout */
.callout {
  position: absolute;
  left: 497px;
  top: 42px;
  width: 248px;
  height: 123px;
  display: flex;
  align-items: center;
  justify-content: center;
  background: #fff;
  border: 2px solid #fbc94a;
  border-radius: 32px;
  box-shadow: inset 0 0 14px 3px #ffdf8c, 3px 3px 7px rgba(30, 30, 30, .7);
}
.callout p {
  font: 19px/22px "Liberation Sans", sans-serif;
  text-align: center;
  color: #333;
}
.tail {
  position: absolute;
  left: -76px;
  top: 68px;
  width: 80px;
  height: 30px;
}
```
